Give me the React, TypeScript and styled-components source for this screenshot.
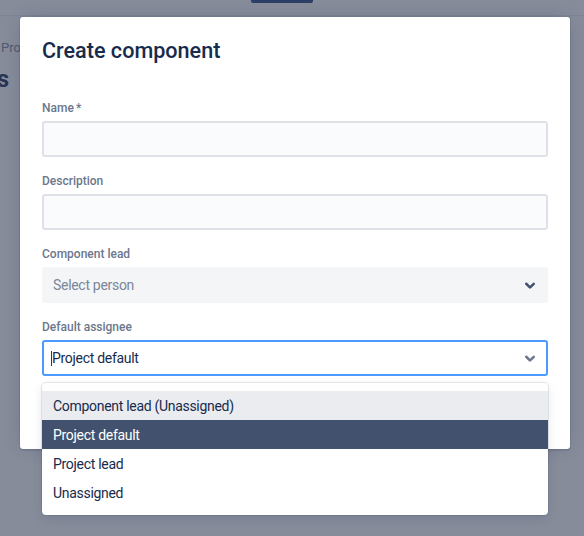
import React from 'react';
import styled, { createGlobalStyle } from 'styled-components';

const GlobalStyle = createGlobalStyle`
  html, body {
    margin: 0;
    padding: 0;
    background: #878c9b;
    font-family: Roboto, "Noto Sans", "Liberation Sans", sans-serif;
    -webkit-font-smoothing: antialiased;
  }
  * { box-sizing: border-box; }
`;

const Screen = styled.div`
  position: relative;
  width: 584px;
  height: 536px;
  overflow: hidden;
  background: #878c9b;
`;

const PageHeader = styled.div`
  height: 16px;
  display: flex;
  align-items: flex-start;
  padding-left: 251px;
  border-bottom: 1px solid #7f8595;
`;

const HeaderButton = styled.div`
  width: 62px;
  height: 3px;
  background: #2c3f66;
  border-radius: 0 0 2px 2px;
`;

const PageBody = styled.div`
  display: flex;
  flex-direction: column;
  padding-top: 24px;
  width: 20px;
  overflow: hidden;
`;

const Breadcrumb = styled.div`
  font-size: 13px;
  line-height: 16px;
  color: #515a72;
  white-space: nowrap;
  padding-left: 1px;
`;

const HeadingClip = styled.div`
  width: 9px;
  display: flex;
  justify-content: flex-end;
  overflow: hidden;
  margin-top: 10px;
`;

const Heading = styled.div`
  font-size: 23px;
  line-height: 28px;
  font-weight: 700;
  color: #283555;
  white-space: nowrap;
`;

const Modal = styled.div`
  position: absolute;
  left: 20px;
  top: 17px;
  width: 550px;
  height: 432px;
  padding: 22px 22px;
  background: #ffffff;
  border-radius: 3px;
  box-shadow: 0 0 0 1px rgba(9, 30, 66, 0.08), 0 2px 1px rgba(9, 30, 66, 0.08), 0 0 20px -6px rgba(9, 30, 66, 0.31);
`;

const Title = styled.h1`
  margin: 0;
  font-size: 21.6px;
  line-height: 24px;
  font-weight: 500;
  color: #172b4d;
`;

const Form = styled.div`
  margin-top: 37px;
  display: flex;
  flex-direction: column;
  gap: 16px;
`;

const Field = styled.div`
  position: relative;
  display: flex;
  flex-direction: column;
  gap: 5px;
`;

const Label = styled.label`
  font-size: 12px;
  line-height: 16px;
  font-weight: 500;
  color: #6b778c;
`;

const Required = styled.span`
  padding-left: 2px;
`;

const TextInput = styled.div`
  height: 36px;
  border: 2px solid #dfe1e6;
  border-radius: 3px;
  background: #fafbfc;
`;

const SelectControl = styled.div<{ $focused?: boolean }>`
  height: 36px;
  display: flex;
  align-items: center;
  padding: 0 1px 0 ${p => (p.$focused ? 7 : 9)}px;
  border: 2px solid ${p => (p.$focused ? '#4c9aff' : '#f4f5f7')};
  border-radius: 3px;
  background: ${p => (p.$focused ? '#ffffff' : '#f4f5f7')};
`;

const SelectValue = styled.span<{ $placeholder?: boolean }>`
  flex: 1;
  display: flex;
  align-items: center;
  font-size: 14px;
  line-height: 20px;
  letter-spacing: -0.3px;
  color: ${p => (p.$placeholder ? '#7a869a' : '#172b4d')};
`;

const Caret = styled.span`
  width: 1px;
  height: 15px;
  background: #253858;
`;

const Chevron = styled.svg<{ $muted?: boolean }>`
  width: 30px;
  height: 30px;
  flex-shrink: 0;
  fill: ${p => (p.$muted ? '#6b778c' : '#42526e')};
`;

const Menu = styled.div`
  position: absolute;
  left: 0;
  right: 0;
  top: calc(100% + 7px);
  padding: 8px 0;
  background: #ffffff;
  border-radius: 4px;
  box-shadow: 0 0 0 1px rgba(9, 30, 66, 0.1), 0 4px 11px rgba(9, 30, 66, 0.1);
  z-index: 2;
`;

const Option = styled.div<{ $state?: 'focused' | 'selected' }>`
  height: 29px;
  display: flex;
  align-items: center;
  padding: 0 11px;
  font-size: 14px;
  letter-spacing: -0.3px;
  color: ${p => (p.$state === 'selected' ? '#ffffff' : '#172b4d')};
  background: ${p => (p.$state === 'selected' ? '#42526e' : p.$state === 'focused' ? '#ebecf0' : 'transparent')};
`;

function ChevronDown({ muted }: { muted?: boolean }) {
  return (
    <Chevron viewBox="0 0 24 24" $muted={muted}>
      <path d="M8.292 10.293a1.009 1.009 0 000 1.419l2.939 2.965c.218.215.5.322.779.322s.556-.107.769-.322l2.93-2.955a1.01 1.01 0 000-1.419.987.987 0 00-1.406 0l-2.298 2.317-2.307-2.327a.99.99 0 00-1.406 0z" />
    </Chevron>
  );
}

const options = [
  { label: 'Component lead (Unassigned)', state: 'focused' as const },
  { label: 'Project default', state: 'selected' as const },
  { label: 'Project lead' },
  { label: 'Unassigned' },
];

export default function App() {
  return (
    <Screen>
      <GlobalStyle />
      <PageHeader>
        <HeaderButton />
      </PageHeader>
      <PageBody>
        <Breadcrumb>Projects</Breadcrumb>
        <HeadingClip>
          <Heading>Components</Heading>
        </HeadingClip>
      </PageBody>

      <Modal>
        <Title>Create component</Title>
        <Form>
          <Field>
            <Label>Name<Required>*</Required></Label>
            <TextInput />
          </Field>
          <Field>
            <Label>Description</Label>
            <TextInput />
          </Field>
          <Field>
            <Label>Component lead</Label>
            <SelectControl>
              <SelectValue $placeholder>Select person</SelectValue>
              <ChevronDown />
            </SelectControl>
          </Field>
          <Field>
            <Label>Default assignee</Label>
            <SelectControl $focused>
              <SelectValue><Caret />Project default</SelectValue>
              <ChevronDown muted />
            </SelectControl>
            <Menu>
              {options.map(o => (
                <Option key={o.label} $state={o.state}>{o.label}</Option>
              ))}
            </Menu>
          </Field>
        </Form>
      </Modal>
    </Screen>
  );
}
